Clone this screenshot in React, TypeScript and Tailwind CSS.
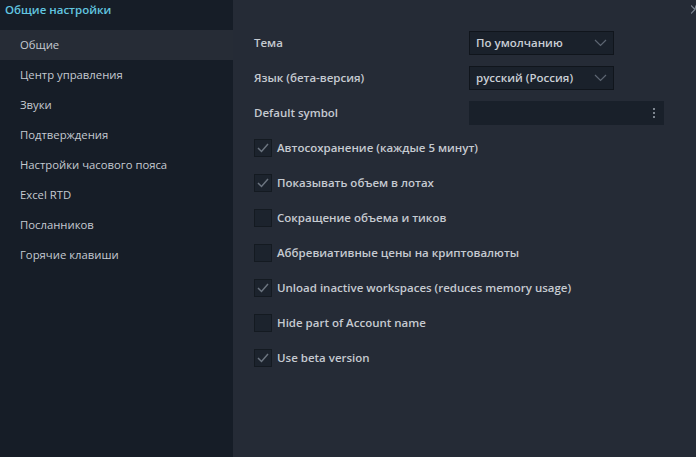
import React from "react";

const items = [
  "Общие",
  "Центр управления",
  "Звуки",
  "Подтверждения",
  "Настройки часового пояса",
  "Excel RTD",
  "Посланников",
  "Горячие клавиши",
];

const checks: [string, boolean][] = [
  ["Автосохранение (каждые 5 минут)", true],
  ["Показывать объем в лотах", true],
  ["Сокращение объема и тиков", false],
  ["Аббревиативные цены на криптовалюты", false],
  ["Unload inactive workspaces (reduces memory usage)", true],
  ["Hide part of Account name", false],
  ["Use beta version", true],
];

function Chevron() {
  return (
    <svg width="13" height="8" viewBox="0 0 13 8" fill="none">
      <path d="M1 1l5.5 5.5L12 1" stroke="#5d6672" strokeWidth="1.2" />
    </svg>
  );
}

function Select({ value }: { value: string }) {
  return (
    <div className="flex h-[24px] w-[145px] items-center justify-between border border-[#10151c] bg-[#1a212b] pl-[6px] pr-[6px] text-[11.5px] font-semibold text-[#c9ced5]">
      <span>{value}</span>
      <Chevron />
    </div>
  );
}

export default function App() {
  return (
    <div
      className="flex h-[457px] w-[696px] overflow-hidden bg-[#252b36] text-[11.5px] text-[#c5cad1]"
      style={{ fontFamily: '"Open Sans", "Noto Sans", sans-serif' }}
    >
      <div className="flex w-[233px] shrink-0 flex-col bg-[#161d27]">
        <div className="h-[30px] pl-[5px] pt-[1px] text-[11.5px] font-semibold text-[#62c6e0]">
          Общие настройки
        </div>
        {items.map((it, i) => (
          <div
            key={it}
            className={`flex h-[30px] items-center pl-[20px] text-[11.3px] ${i === 0 ? "bg-[#262c36]" : ""}`}
          >
            {it}
          </div>
        ))}
      </div>
      <div className="relative flex-1 pl-[21px] pt-[31px]">
        <svg className="absolute right-0 top-[5px]" width="5" height="9" viewBox="0 0 5 9" fill="none">
          <path d="M0 0.5l4 4-4 4M5 0.5L4 4.5" stroke="#7c8590" strokeWidth="1.2" />
        </svg>
        <div className="flex h-[24px] items-center">
          <div className="w-[215px] font-semibold">Тема</div>
          <Select value="По умолчанию" />
        </div>
        <div className="mt-[11px] flex h-[24px] items-center">
          <div className="w-[215px] font-semibold">Язык (бета-версия)</div>
          <Select value="русский (Россия)" />
        </div>
        <div className="mt-[11px] flex h-[24px] items-center">
          <div className="w-[215px] font-semibold">Default symbol</div>
          <div className="flex h-[24px] w-[195px] items-center justify-end bg-[#19202a] pr-[9px]">
            <div className="flex flex-col gap-[2px]">
              <div className="h-[2px] w-[2px] bg-[#7d858f]" />
              <div className="h-[2px] w-[2px] bg-[#7d858f]" />
              <div className="h-[2px] w-[2px] bg-[#7d858f]" />
            </div>
          </div>
        </div>
        <div className="mt-[5px] flex flex-col">
          {checks.map(([label, on]) => (
            <div key={label} className="flex h-[35px] items-center">
              <div className="flex h-[18px] w-[18px] items-center justify-center border border-[#141a21] bg-[#1c232d]">
                {on && (
                  <svg width="12" height="10" viewBox="0 0 12 10" fill="none">
                    <path d="M1 5l3.5 3.5L11 1" stroke="#6c7580" strokeWidth="1.5" />
                  </svg>
                )}
              </div>
              <span className="ml-[5px] font-semibold">{label}</span>
            </div>
          ))}
        </div>
      </div>
    </div>
  );
}
